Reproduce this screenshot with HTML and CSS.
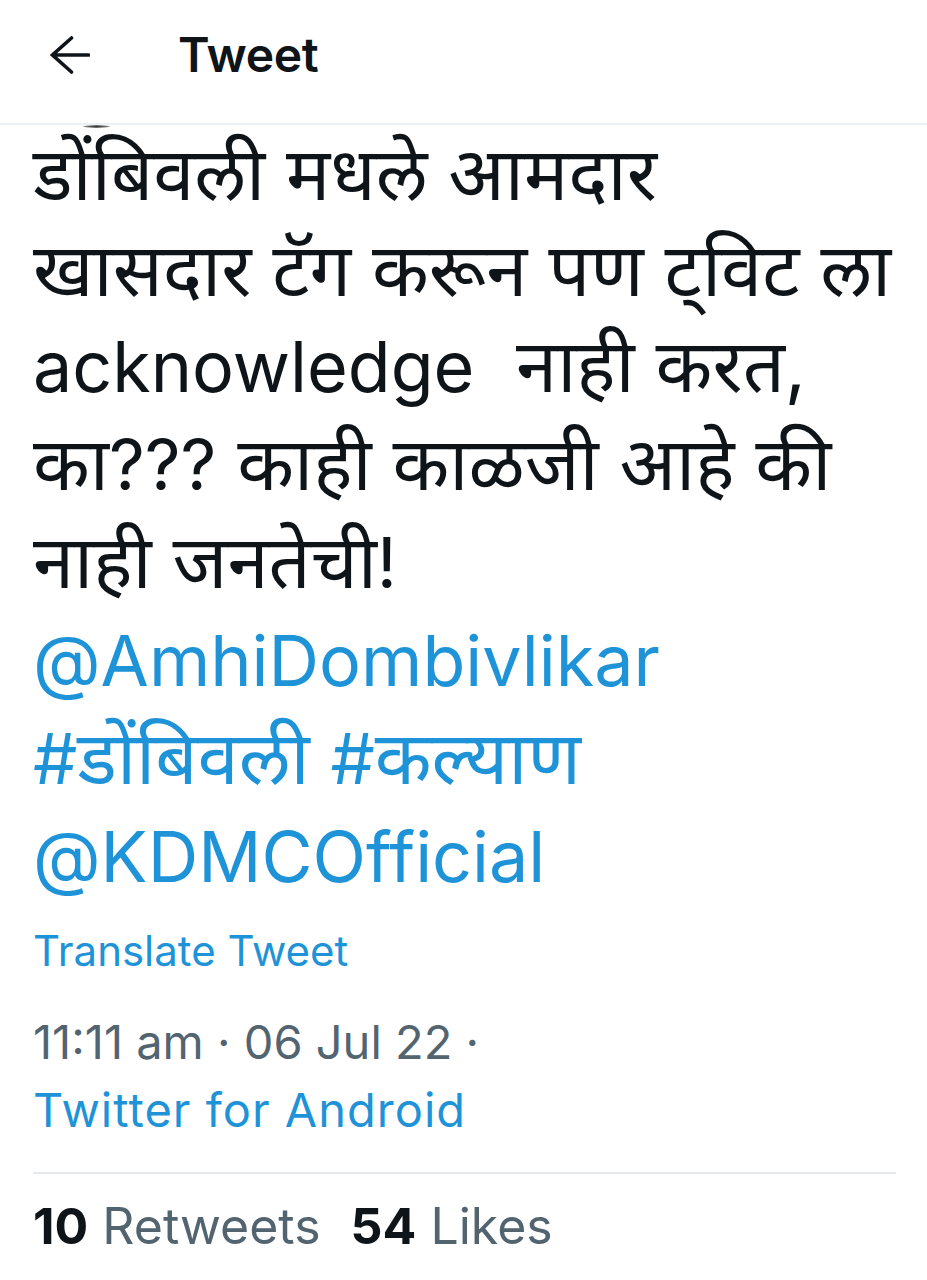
FILE: index.html
```html
<!DOCTYPE html>
<html lang="mr">
<head>
<meta charset="utf-8">
<title>Tweet</title>
<link rel="stylesheet" href="styles.css">
</head>
<body>
<div class="page">
  <header class="topbar">
    <svg class="back" viewBox="0 0 40 38" width="40" height="38" aria-hidden="true">
      <path d="M38.5 19H2.5M21.5 2L2.5 19l19 17" fill="none" stroke="#0f1419" stroke-width="3.6" stroke-linecap="round" stroke-linejoin="miter"/>
    </svg>
    <h1 class="title">Tweet</h1>
  </header>
  <main class="tweet">
    <span class="clip-mark" aria-hidden="true"></span>
    <p class="body">डोंबिवली मधले आमदार<br>खासदार टॅग करून पण ट्विट ला<br><span class="lat">acknowledge</span>&nbsp; नाही करत,<br>का<span class="lat">???</span> काही काळजी आहे की<br>नाही जनतेची<span class="lat">!</span><br><a class="link lat">@AmhiDombivlikar</a><br><a class="link"><span class="lat">#</span>डोंबिवली</a> <a class="link"><span class="lat">#</span>कल्याण</a><br><a class="link lat">@KDMCOfficial</a></p>
    <a class="translate">Translate Tweet</a>
    <div class="meta">
      <div class="time">11:11 am · 06 Jul 22 ·</div>
      <a class="source">Twitter for Android</a>
    </div>
    <div class="stats">
      <span class="stat"><b>10</b> Retweets</span>
      <span class="stat"><b>54</b> Likes</span>
    </div>
  </main>
</div>
</body>
</html>
```

FILE: styles.css
```css
* { box-sizing: border-box; }
html, body { margin: 0; padding: 0; background: #ffffff; }
body {
  font-family: "Inter", "Noto Sans Devanagari", "Lohit Devanagari", "Noto Sans", sans-serif;
  color: #0f1419;
}
.page { width: 927px; min-height: 1280px; background: #fff; overflow: hidden; }

.topbar {
  height: 125px;
  display: flex;
  align-items: center;
  padding: 0 0 14px 50px;
  border-bottom: 2px solid #eef1f3;
}
.back { width: 40px; height: 38px; flex: none; }
.title {
  margin: 0 0 0 88px;
  font-size: 48px;
  font-weight: 600;
  letter-spacing: -0.3px;
  color: #0f1419;
}

.tweet {
  position: relative;
  padding: 0 31px 0 33px;
}
.clip-mark {
  position: absolute;
  left: 83px;
  top: 0;
  width: 27px;
  height: 3px;
  border-radius: 50%;
  background: radial-gradient(ellipse at center, #333 0%, #666 45%, rgba(200,200,200,0) 100%);
}

.body {
  margin: 0;
  font-size: 74px;
  line-height: 96px;
  color: #0f1419;
  white-space: nowrap;
}
.lat { font-size: 70px; }
.link { color: #1f93d8; text-decoration: none; }

.translate {
  display: block;
  margin-top: 16px;
  font-size: 42px;
  line-height: 60px;
  color: #1f93d8;
}

.meta {
  margin-top: 27px;
  font-size: 47px;
  line-height: 68px;
  padding-bottom: 28px;
  border-bottom: 2px solid #e6eaed;
}
.time { color: #536471; }
.source { color: #1f93d8; display: block; letter-spacing: 1px; }

.stats {
  display: flex;
  gap: 30px;
  padding-top: 18px;
  font-size: 50px;
  line-height: 68px;
  color: #536471;
}
.stat b { color: #0f1419; font-weight: 700; }
```
